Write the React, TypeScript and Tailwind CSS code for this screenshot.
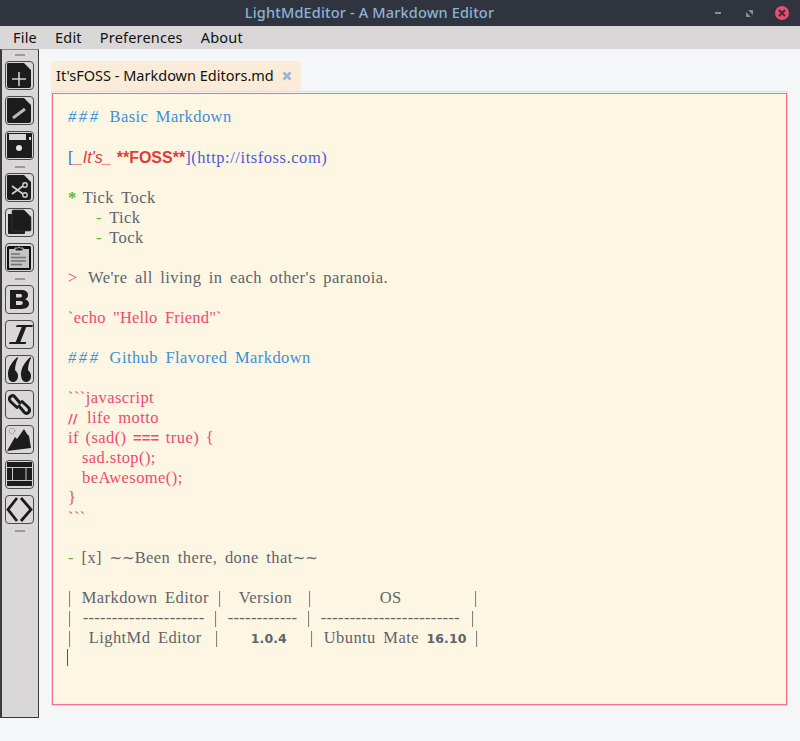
import React from "react";

const Btn = ({ children }: { children: React.ReactNode }) => (
  <div className="w-[29px] h-[29px] mb-[6px] rounded-[4px] border border-[#4a4a4a] flex items-center justify-center overflow-hidden">
    <svg viewBox="0 0 27 27" className="w-[27px] h-[27px]">
      {children}
    </svg>
  </div>
);

const Sep = () => <div className="w-[10px] h-[2px] bg-[#9a9a9a] mb-[5px] shrink-0" />;

const page = "M2 1h16l7 7v16a2 2 0 0 1-2 2H3a2 2 0 0 1-2-2V3a2 2 0 0 1 1-2z";

const Toolbar = () => (
  <aside className="w-[39px] h-[669px] shrink-0 bg-[#d9d7d8] border border-[#3a3a3a] border-l-2 border-t-[#888] flex flex-col items-center pt-[4px] pr-px">
    <Sep />
    <Btn>
      <path d={page} fill="#1c1c1c" />
      <path d="M13 10v14M6 17h14" stroke="#d0d0d0" strokeWidth="1.6" />
    </Btn>
    <Btn>
      <path d={page} fill="#1c1c1c" />
      <path d="M7 21l12-9" stroke="#b8b8b8" strokeWidth="3" />
    </Btn>
    <Btn>
      <path d="M2 1h23a1 1 0 0 1 1 1v23a1 1 0 0 1-1 1H2a1 1 0 0 1-1-1V2a1 1 0 0 1 1-1z" fill="#1c1c1c" />
      <rect x="3" y="2" width="17" height="6" fill="#d8d8d8" />
      <rect x="23" y="5" width="2" height="3" fill="#d8d8d8" />
      <circle cx="13" cy="16" r="3" fill="#e4e4e4" />
    </Btn>
    <Sep />
    <Btn>
      <path d={page} fill="#1c1c1c" />
      <circle cx="19" cy="11" r="2.2" fill="none" stroke="#d0d0d0" strokeWidth="1.4" />
      <circle cx="19" cy="21" r="2.2" fill="none" stroke="#d0d0d0" strokeWidth="1.4" />
      <path d="M6 12l11 8M6 20l11-8" stroke="#d0d0d0" strokeWidth="1.6" />
    </Btn>
    <Btn>
      <path d="M2 5h17v19a1 1 0 0 1-1 1H3a1 1 0 0 1-1-1z" fill="#1c1c1c" />
      <path d="M7 1h11l7 7v13a1 1 0 0 1-1 1H7a1 1 0 0 1-1-1V2a1 1 0 0 1 1-1z" fill="#1c1c1c" stroke="#3c3c3c" strokeWidth="0.6" />
    </Btn>
    <Btn>
      <rect x="1" y="2" width="24" height="24" rx="1.500" fill="#111" />
      <rect x="3" y="5" width="20" height="19" fill="#c4c4c4" />
      <path d="M9 7V4h2.500a1.800 1.800 0 0 1 3 0H17v3z" fill="#222" stroke="#d8d8d8" strokeWidth="0.9" />
      <path d="M5 10h9M5 13.500h15M5 17h15M5 20.500h11" stroke="#6f7378" strokeWidth="1.500" />
    </Btn>
    <Sep />
    <Btn>
      <path
        fillRule="evenodd"
        d="M4 4h11c4.500 0 7 1.800 7 5 0 2-1 3.500-3 4.200 2.600.7 4 2.400 4 4.600 0 3.200-2.800 5.200-7.500 5.200H4zM10 8v3.500h4c1.300 0 2-.7 2-1.800S15.300 8 14 8zM10 15v4h4.500c1.500 0 2.300-.8 2.300-2s-.8-2-2.300-2z"
        fill="#1c1c1c"
      />
    </Btn>
    <Btn>
      <path d="M11 4h16l-.7 2h-6l-6 15h6l-.7 2H3l.7-2h6l6-15h-6z" fill="#1c1c1c" />
    </Btn>
    <Btn>
      <path d="M11.500 1C7 5 2 11 2 18c0 5 2 8 5 8s5-2.500 5-6c0-3-1.500-4.500-3-6 .2-4 1-8 3-12z" fill="#1c1c1c" />
      <path d="M24.500 1C20 5 15 11 15 18c0 5 2 8 5 8s5-2.500 5-6c0-3-1.500-4.500-3-6 .2-4 1-8 3-12z" fill="#1c1c1c" />
    </Btn>
    <Btn>
      <g fill="none" stroke="#1c1c1c" strokeWidth="3" strokeLinecap="round">
        <path d="M14 12L8.500 5.500C6.500 3.500 3 5.500 3.500 8.500c.2 1 .8 1.800 1.500 2.500l6 5.500" />
        <path d="M13 15l5.500 6.500c2 2 5.500 0 5-3-.2-1-.8-1.800-1.500-2.500l-6-5.500" />
      </g>
    </Btn>
    <Btn>
      <circle cx="6" cy="5" r="2.800" fill="none" stroke="#808080" strokeWidth="1" strokeDasharray="1.200 0.800" />
      <path d="M1 25L9 11l2 2 7-10 3 5 2 2 2 12z" fill="#1c1c1c" />
    </Btn>
    <Btn>
      <rect x="1" y="1" width="25" height="24" fill="#1c1c1c" />
      <path d="M1 6.500h25M1 19.500h25M6.500 6.500v13M20 6.500v13" stroke="#c9c9c9" strokeWidth="1" />
    </Btn>
    <Btn>
      <path d="M11 2L2 13.500 11 25M15 2l10 11.500L15 25" fill="none" stroke="#1c1c1c" strokeWidth="2.800" />
    </Btn>
    <Sep />
  </aside>
);

const blue = "text-[#3f8fd2]";
const pink = "text-[#ef4a6e]";
const green = "text-[#5cb531]";
const sans = "font-['Liberation_Sans',sans-serif]";
const dejavu = "font-['DejaVu_Sans',sans-serif]";
const pipe = "inline-block text-[#62626c] grayscale";

const Line = ({ children }: { children?: React.ReactNode }) => <div className="h-[20px] whitespace-pre">{children || " "}</div>;

const Hashes = () => <span className="italic tracking-[2.6px] mr-[9px]">###</span>;

const Num = ({ children }: { children: React.ReactNode }) => (
  <span className={`${dejavu} text-[12.500px] tracking-[0.1px] font-semibold`}>{children}</span>
);

const Tildes = () => <span className={`${dejavu} text-[15px] tracking-normal`}>~~</span>;

const Editor = () => (
  <div className="h-[612px] bg-[#fdf6e3] border border-[#f2708a] pl-[15px] pt-[13px] font-['Liberation_Serif',serif] text-[16.500px] leading-[20px] tracking-[0.42px] [word-spacing:3px] text-[#62626c]">
    <div className="h-[21px] whitespace-pre"><span className={blue}><Hashes />Basic Markdown</span></div>
    <Line />
    <Line>
      <span className="text-[#5457d6]">[</span>
      <span className={`${sans} italic text-[#e23b3b] text-[16px] tracking-normal`}>_It's_</span>
      <span className="ml-[5px]" />
      <span className={`${sans} font-bold text-[#e23b3b] text-[16px] tracking-normal`}>**FOSS**</span>
      <span className="text-[#5457d6] tracking-[0.55px]">](http://itsfoss.com)</span>
    </Line>
    <Line />
    <Line><span className={`${green} font-bold mr-[6px]`}>*</span>Tick Tock</Line>
    <Line><span className="ml-[28px]"><span className={green}>-</span> Tick</span></Line>
    <Line><span className="ml-[28px]"><span className={green}>-</span> Tock</span></Line>
    <Line />
    <Line><span className={`${pink} mr-[3px]`}>&gt;</span> We're all living in each other's paranoia.</Line>
    <Line />
    <Line><span className={`${pink} tracking-[0.2px]`}>`echo "Hello Friend"`</span></Line>
    <Line />
    <Line><span className={blue}><Hashes />Github Flavored Markdown</span></Line>
    <Line />
    <div className={pink}>
      <Line>```javascript</Line>
      <Line><span className={`${dejavu} font-bold text-[13px] tracking-normal mr-[2px]`}>//</span> life motto</Line>
      <Line><span className="[word-spacing:2px]">if (sad() <span className={`${sans} font-bold text-[15px] tracking-normal`}>===</span> true) {"{"}</span></Line>
      <Line><span className="ml-[14px]">sad.stop();</span></Line>
      <Line><span className="ml-[14px]">beAwesome();</span></Line>
      <Line>{"}"}</Line>
      <Line>```</Line>
    </div>
    <Line />
    <Line><span className={green}>-</span> [x] <Tildes />Been there, done that<Tildes /></Line>
    <Line />
    <Line>
      <span className="inline-block w-[150px]"><span className={pipe}>|</span><span className="ml-[10px]">Markdown Editor</span></span>
      <span className="inline-block w-[90px]"><span className={pipe}>|</span><span className="ml-[17px]">Version</span></span>
      <span className="inline-block w-[166px]"><span className={pipe}>|</span><span className="ml-[68px]">OS</span></span>
      <span className={pipe}>|</span>
    </Line>
    <Line>
      <span className="inline-block w-[146px]"><span className={pipe}>|</span><span className="ml-[11px] tracking-[0.3px]">---------------------</span></span>
      <span className="inline-block w-[93px]"><span className={pipe}>|</span><span className="ml-[10px] tracking-[0.3px]">------------</span></span>
      <span className="inline-block w-[164px]"><span className={pipe}>|</span><span className="ml-[10px] tracking-[0.3px]">------------------------</span></span>
      <span className={pipe}>|</span>
    </Line>
    <Line>
      <span className="inline-block w-[147px]"><span className={pipe}>|</span><span className="ml-[17px]">LightMd Editor</span></span>
      <span className="inline-block w-[95px]"><span className={pipe}>|</span><span className="ml-[32px]"><Num>1.0.4</Num></span></span>
      <span className="inline-block w-[165px]"><span className={pipe}>|</span><span className="ml-[10px]">Ubuntu Mate <Num>16.10</Num></span></span>
      <span className={pipe}>|</span>
    </Line>
    <div className="w-px h-[17px] bg-[#55555f] -ml-px mt-[1px]" />
  </div>
);

export default function App() {
  return (
    <div className="w-full h-screen overflow-hidden flex flex-col bg-[#f5f6f8] font-['Noto_Sans',sans-serif]">
      <header className="h-[26px] shrink-0 bg-[#2f343f] flex items-center">
        <div className="w-[739px] text-center text-[14.500px] tracking-[0.16px] text-[#8bb2d8] font-medium">
          LightMdEditor - A Markdown Editor
        </div>
        <div className="flex-1 flex items-center">
          <div className="w-[6px] h-[2px] bg-[#8a8d93] ml-[-24px]" />
          <svg viewBox="0 0 7 7" className="w-[7px] h-[7px] ml-[25px]">
            <path d="M0 2v5h5zM2 0h5v5z" fill="#8a8d93" />
          </svg>
          <div className="w-[14px] h-[14px] ml-[22px] rounded-full bg-[#f04a6e] flex items-center justify-center">
            <svg viewBox="0 0 8 8" className="w-[8px] h-[8px]">
              <path d="M1 1l6 6M7 1L1 7" stroke="#2f343f" strokeWidth="2" />
            </svg>
          </div>
        </div>
      </header>
      <nav className="h-[23px] shrink-0 bg-[#d9d7d8] flex items-center pl-[13px] gap-[18px] text-[14.500px] tracking-[0.2px] text-[#111]">
        <span>File</span>
        <span>Edit</span>
        <span>Preferences</span>
        <span>About</span>
      </nav>
      <div className="flex">
        <Toolbar />
        <main className="flex-1 pt-[12px] pl-[12px] pr-[12px]">
          <div className="w-[250px] h-[30px] bg-[#fbecd9] rounded-t-[3px] flex items-center pl-[5px] text-[14.500px] text-[#111]">
            <span>It'sFOSS - Markdown Editors.md</span>
            <svg viewBox="0 0 10 10" className="w-[10px] h-[10px] ml-[8px]">
              <path d="M1.500 1.500l7 7M8.500 1.500l-7 7" stroke="#9db3d4" strokeWidth="2.600" />
            </svg>
          </div>
          <div className="border border-[#dcdde2] w-[737px] pt-px">
            <Editor />
          </div>
        </main>
      </div>
    </div>
  );
}
